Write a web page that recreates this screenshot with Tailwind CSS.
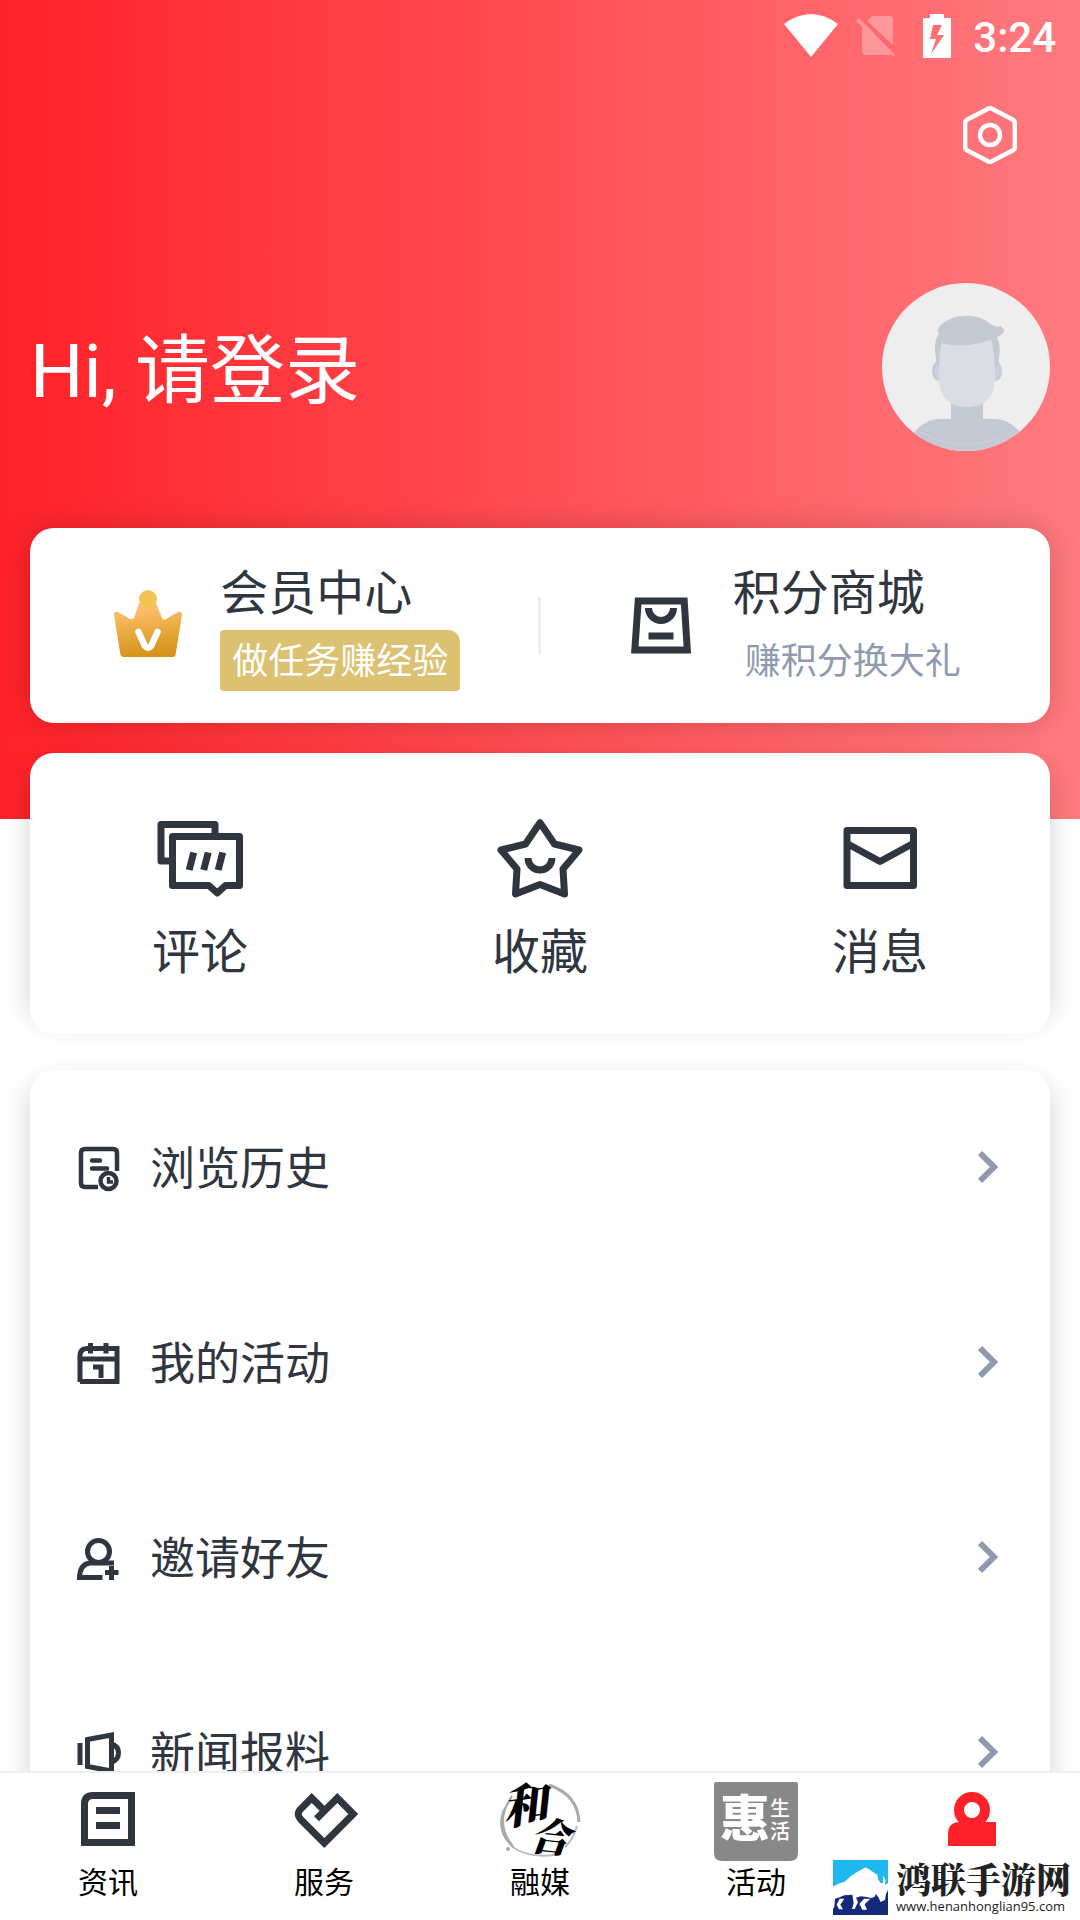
<!DOCTYPE html>
<html lang="zh-CN">
<head>
<meta charset="UTF-8">
<meta name="viewport" content="width=device-width, initial-scale=1">
<title>我的</title>
<script src="https://cdn.jsdelivr.net/npm/@tailwindcss/browser@4"></script>
</head>
<body class="flex h-screen flex-col overflow-hidden bg-white font-[Roboto,'Noto_Sans_CJK_SC',sans-serif] text-[#2f363f]">

<main class="min-h-0 flex-1 overflow-y-auto bg-[linear-gradient(90deg,#ff2128,#ff7b80)] bg-[length:100%_819px] bg-no-repeat [scrollbar-width:none]">

  <!-- Status bar -->
  <div class="flex h-[72px] items-center justify-end pr-6 text-white">
    <svg class="mr-[18px] h-11 w-[54px]" viewBox="0 0 54 44" fill="currentColor"><path d="M0 10Q27-10 54 10L27 43z"/></svg>
    <svg class="mr-[27px] h-11 w-10" viewBox="0 0 40 44" fill="currentColor" opacity=".3"><path d="M11 7l5-5h18q3 0 3 3v26L11 7zM6 12l28 28-1 1H9q-3 0-3-3z"/><path d="M3 4L39 41l-2 2L0 7z"/></svg>
    <svg class="mr-[22px] h-11 w-7" viewBox="0 0 28 44" fill="currentColor" fill-rule="evenodd"><path d="M7 0h14v4h7v40H0V4h7zM10 11L7 25h6L8 40 21 21h-7l5-10z"/></svg>
    <span class="pt-1 text-[42px] leading-[50px] font-medium">3:24</span>
  </div>

  <!-- Settings -->
  <div class="flex h-[126px] items-center justify-end pr-[60px]">
    <button type="button" aria-label="设置" class="text-white">
      <svg class="h-[60px] w-[60px]" viewBox="0 0 60 60" fill="none" stroke="currentColor" stroke-width="4.400" stroke-linejoin="round"><path d="M28.500 3.500Q30 2.700 31.500 3.500L53.500 15Q54.800 16 54.800 17.500V42.500Q54.800 44 53.500 45L31.500 56.500Q30 57.300 28.500 56.500L6.500 45Q5.200 44 5.200 42.500V17.500Q5.200 16 6.500 15z"/><circle cx="30" cy="30" r="10"/></svg>
    </button>
  </div>

  <!-- Profile -->
  <header class="flex items-center justify-between px-[30px] pt-[85px] pb-[77px]">
    <h1 class="pt-2"><a href="#login" class="text-[75px] leading-[100px] text-white">Hi, 请登录</a></h1>
    <svg class="h-[168px] w-[168px] rounded-full" viewBox="0 0 168 168" role="img" aria-label="头像">
      <rect width="168" height="168" fill="#eee"/>
      <path d="M69 118h32v18h14q13 1 24 14v18H30v-16q12-16 28-16h11z" fill="#c5c9d4"/>
      <path d="M38 149q45 26 95-2" fill="none" stroke="#d0d3dc" stroke-width=".8"/>
      <ellipse cx="56" cy="88" rx="6" ry="10" fill="#c3cde0"/><ellipse cx="114" cy="88" rx="6" ry="10" fill="#c3cde0"/>
      <ellipse cx="57" cy="88" rx="4" ry="7" fill="#cdd2dc"/><ellipse cx="113" cy="88" rx="4" ry="7" fill="#cdd2dc"/>
      <path d="M57 51q-7 8-2 30l3 6 4-36zM114 53q6 8 2 28l-2 6-7-37z" fill="#c5c9d4"/>
      <path d="M60 57h49q4 12 4 37c0 22-12 30-28 30S57 116 57 94q0-24 3-37z" fill="#dcdde3"/>
      <path d="M57 51q-3-4 1-8c12-13 37-13 49-3q6 4 10 4 2-3 3 1l2 1q0 6-7 8-25 12-54 7-2-5-4-10z" fill="#c5c9d4"/>
    </svg>
  </header>

  <!-- Membership and points -->
  <section class="mx-[30px] flex h-[195px] items-center rounded-3xl bg-white shadow-[0_0_30px_rgba(0,0,0,0.18)]">
    <a href="#member" class="flex flex-1 items-center justify-center gap-8 pl-px">
      <svg class="h-20 w-20" viewBox="0 0 80 80">
        <defs><linearGradient id="gold" x1="0" y1="0" x2=".15" y2="1"><stop offset=".1" stop-color="#ffc170"/><stop offset="1" stop-color="#d6951a"/></linearGradient></defs>
        <path d="M31 17h17l6 15q1 3 4 1l12-7q4-1 4 3l-6.500 40q-.5 2-3 2H16q-3 0-3.500-2L6 29q0-4 4-3l12 7q3 1 4-1z" fill="url(#gold)"/>
        <circle cx="40" cy="13" r="9" fill="#f3c653"/>
        <path d="M30.500 46L37 60q3 3 6 0l6.500-14" fill="none" stroke="#fff" stroke-width="6.500" stroke-linecap="round"/>
      </svg>
      <span class="flex flex-col items-start gap-1">
        <span class="pt-0.5 text-5xl/[64px]">会员中心</span>
        <span class="rounded rounded-tr-xl bg-[#dcc173] px-3 pt-1 text-4xl/[57px] text-white">做任务赚经验</span>
      </span>
    </a>
    <div class="h-[57px] w-[3px] bg-[#eee]"></div>
    <a href="#mall" class="flex flex-1 items-center justify-center gap-8 pl-[3px]">
      <svg class="h-20 w-20" viewBox="0 0 80 80" fill="none" stroke="currentColor" stroke-width="7"><path d="M17.200 15h46L66.300 64H13.800zM27.500 22a12.500 12.500 0 0 0 25 0M27.500 50h25"/></svg>
      <span class="flex flex-col items-start gap-1">
        <span class="pt-0.5 text-5xl/[64px]">积分商城</span>
        <span class="px-3 pt-1 text-4xl/[57px] text-[#8f9ab0]">赚积分换大礼</span>
      </span>
    </a>
  </section>

  <!-- Shortcuts -->
  <section class="mx-[30px] mt-[30px] grid h-[281px] grid-cols-3 rounded-3xl bg-white pt-[60px] text-5xl/[60px] shadow-[16px_0_28px_-16px_rgba(0,0,0,0.18),-16px_0_28px_-16px_rgba(0,0,0,0.18)]">
    <a href="#comments" class="flex flex-col items-center gap-5">
      <svg class="h-[90px] w-[90px]" viewBox="0 0 90 90" fill="none" stroke="currentColor" stroke-width="7" stroke-linejoin="round"><path d="M60 22V11.500H6V48h11M17.500 23.500h67v49H70.500L62.300 80l-8.500-7.500H17.500zM38.700 39.500L34.200 57M53.200 39.500L48.700 57M67.700 39.500L63.200 57"/></svg>
      <span>评论</span>
    </a>
    <a href="#favorites" class="flex flex-col items-center gap-5">
      <svg class="h-[90px] w-[90px]" viewBox="0 0 90 90" fill="none" stroke="currentColor" stroke-width="7" stroke-linejoin="round"><path d="M45 9.700L59.500 31 84 37 68 56 69.500 81 45 71.500 20.500 81 22 56 6 37 30.500 31zM33 45a12 12 0 0 0 24 0"/></svg>
      <span>收藏</span>
    </a>
    <a href="#messages" class="flex flex-col items-center gap-5">
      <svg class="h-[90px] w-[90px]" viewBox="0 0 90 90" fill="none" stroke="currentColor" stroke-width="7" stroke-linejoin="round"><path d="M12 17.500h66.500v55H12zM12 30.500l33 18 33-18"/></svg>
      <span>消息</span>
    </a>
  </section>

  <!-- Menu -->
  <ul class="mx-[30px] mt-9 rounded-3xl bg-white text-[45px]/[66px] shadow-[16px_0_28px_-16px_rgba(0,0,0,0.18),-16px_0_28px_-16px_rgba(0,0,0,0.18)]">
    <li><a href="#history" class="flex h-[195px] items-center gap-7 pr-12 pl-11">
      <svg class="h-12 w-12" viewBox="0 0 48 48" fill="none" stroke="currentColor" stroke-width="4.500"><path d="M43 27V9q0-4-4-4H11Q7 5 7 9v30q0 4 4 4h13"/><path d="M18 16.500h8M18 24.500h15" stroke-linecap="round"/><circle cx="34.500" cy="37" r="8"/><path d="M34.500 33v5h4.500" stroke-width="3.500"/></svg>
      <span class="flex-1 pt-1">浏览历史</span>
      <svg class="h-9 w-6 text-[#8f9ab0]" viewBox="0 0 24 36" fill="none" stroke="currentColor" stroke-width="6"><path d="M2 3l14 14L2 31"/></svg>
    </a></li>
    <li><a href="#activities" class="flex h-[195px] items-center gap-7 pr-12 pl-11">
      <svg class="h-12 w-12" viewBox="0 0 48 48" fill="none" stroke="currentColor" stroke-width="5"><path d="M6 43V17q0-7.500 7-7.500h30V42.500H6M5.800 20h37M16.500 4v10.500M32 4v10.500M19 28h8v11"/></svg>
      <span class="flex-1 pt-1">我的活动</span>
      <svg class="h-9 w-6 text-[#8f9ab0]" viewBox="0 0 24 36" fill="none" stroke="currentColor" stroke-width="6"><path d="M2 3l14 14L2 31"/></svg>
    </a></li>
    <li><a href="#invite" class="flex h-[195px] items-center gap-7 pr-12 pl-11">
      <svg class="h-12 w-12" viewBox="0 0 48 48" fill="none" stroke="currentColor" stroke-width="5"><circle cx="24.500" cy="17.500" r="11"/><path d="M40 29H16q-10 1-10.500 14.500h23M37.500 32v14M31 38.500h13.500"/></svg>
      <span class="flex-1 pt-1">邀请好友</span>
      <svg class="h-9 w-6 text-[#8f9ab0]" viewBox="0 0 24 36" fill="none" stroke="currentColor" stroke-width="6"><path d="M2 3l14 14L2 31"/></svg>
    </a></li>
    <li><a href="#tips" class="flex h-[195px] items-center gap-7 pr-12 pl-11">
      <svg class="h-12 w-12" viewBox="0 0 48 48" fill="none" stroke="currentColor" stroke-width="5"><path d="M6 14v22M13.500 10.500L37.500 6v36l-24-4.500zM37.500 15q7 2 7 9t-7 9"/></svg>
      <span class="flex-1 pt-1">新闻报料</span>
      <svg class="h-9 w-6 text-[#8f9ab0]" viewBox="0 0 24 36" fill="none" stroke="currentColor" stroke-width="6"><path d="M2 3l14 14L2 31"/></svg>
    </a></li>
  </ul>
</main>

<!-- Tab bar -->
<nav class="relative grid grid-cols-5 border-t-2 border-[#eee] bg-white pt-[5px] pb-4 text-3xl/[42px] text-black">
  <a href="#news" class="flex flex-col items-center">
    <svg class="h-[84px] w-[84px] text-[#2f363f]" viewBox="0 0 84 84" fill="none" stroke="currentColor" stroke-width="7"><path d="M65.500 17.500H27q-8.500 0-8.500 8.500v38.500h47zM30 32.500h24M30 47.500h24"/></svg>
    <span>资讯</span>
  </a>
  <a href="#service" class="flex flex-col items-center">
    <svg class="h-[84px] w-[84px] text-[#2f363f]" viewBox="0 0 84 84" fill="none" stroke="currentColor" stroke-width="7"><path d="M42.300 32.500L29.700 20 19 30.700Q13.500 36 19 41.700L42.300 65l29-29L55.300 20 34.500 40.800"/></svg>
    <span>服务</span>
  </a>
  <a href="#media" class="flex flex-col items-center">
    <svg class="h-[84px] w-[84px] overflow-visible" viewBox="0 0 84 84" fill="none">
      <path d="M14 18Q-3 42 12 64l4 6Q-2 54 5 34z" fill="#aaa" stroke="#aaa" stroke-width="2"/>
      <path d="M51 7Q80 17 81 44" stroke="#aaa" stroke-width="3"/><path d="M79 48q-4 14-12 21M16 70q16 10 40 7" stroke="#bbb" stroke-width="2"/>
      <circle cx="10" cy="71" r="2" fill="#aaa"/><circle cx="3" cy="42" r="1" fill="#aaa"/>
      <text x="4" y="44" transform="rotate(-8 26 28)" font-size="46" font-style="italic" font-weight="900" fill="#000" font-family="'Noto Serif CJK SC','Noto Sans CJK SC',serif">和</text>
      <text x="32" y="74" transform="rotate(6 54 58)" font-size="40" font-style="italic" font-weight="900" fill="#000" font-family="'Noto Serif CJK SC','Noto Sans CJK SC',serif">合</text>
    </svg>
    <span>融媒</span>
  </a>
  <a href="#life" class="flex flex-col items-center">
    <svg class="h-[84px] w-[84px]" viewBox="0 0 84 84" fill="#fff" font-family="'Noto Sans CJK SC',sans-serif">
      <path d="M2 4h80q2 0 2 2v69q0 8-8 8H8q-8 0-8-8V6q0-2 2-2z" fill="#888"/>
      <text x="6" y="59" font-size="50" font-weight="900">惠</text>
      <text x="56" y="38" font-size="20" font-weight="500">生</text>
      <text x="56" y="61" font-size="20" font-weight="500">活</text>
    </svg>
    <span>活动</span>
  </a>
  <a href="#me" aria-label="我的" aria-current="page" class="flex flex-col items-center">
    <svg class="h-[84px] w-[84px]" viewBox="0 0 84 84" fill="#ff2128"><circle cx="42" cy="32" r="13" fill="none" stroke="#ff2128" stroke-width="10"/><path d="M66 44v24H18V56q0-12 12-12z"/></svg>
  </a>

  <!-- Site badge over the tab bar -->
  <div class="absolute right-[9px] bottom-[5px] flex items-center gap-2 text-[#222]">
    <svg class="h-[55px] w-[55px]" viewBox="0 0 165 165">
      <path d="M0 0h165v80H0z" fill="#1fb8f0"/><path d="M0 80h165v85H0z" fill="#14297a"/>
      <path d="M0 80Q18 68 35 65 50 48 72 36L98 22 133 44l3 14 8 8q10-4 5-20l9 14-3 14 10-4v20l-6 12-3 18-13 6-7-14-7-10-4 8-10 4-14-3-18-2-14 4 6 14-10 20H57l5-17-4-26-24 2-14 6-14 4-2 24-4 8H0z" fill="#fff"/>
      <path d="M34 116h-14l-9 18 7 14h12l-8-14zM112 116H93l-14 16 9 17h14l-7-16z" fill="#fff"/>
      <path d="M144 34l-9 22 8 14 8-2z" fill="#1fb8f0"/>
    </svg>
    <div class="flex flex-col">
      <span class="font-['Noto_Serif_CJK_SC','Noto_Sans_CJK_SC',serif] text-[35px] leading-[38px] font-black">鸿联手游网</span>
      <span class="font-['Open_Sans',sans-serif] text-[13px] leading-[18px] font-medium">www.henanhonglian95.com</span>
    </div>
  </div>
</nav>

</body>
</html>
